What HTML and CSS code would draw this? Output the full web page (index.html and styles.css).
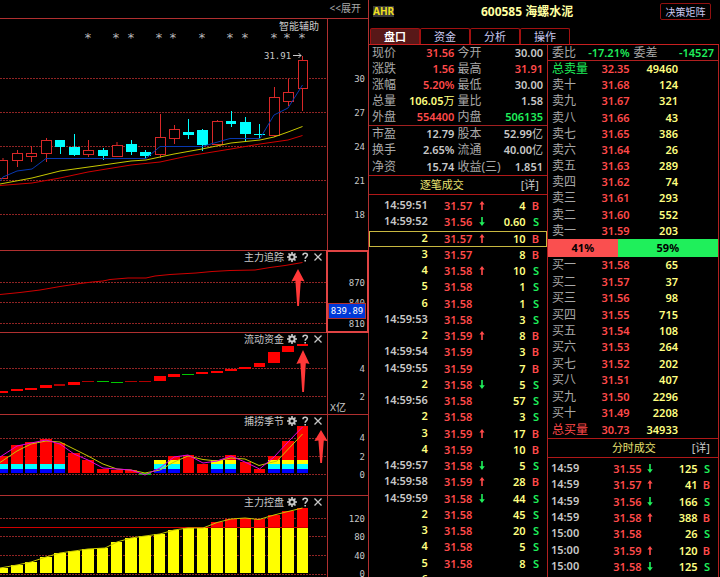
FILE: index.html
```html
<!DOCTYPE html>
<html lang="zh-CN">
<head>
    <meta charset="UTF-8">
    <meta name="viewport" content="width=device-width, initial-scale=1.0">
    <title>600585 海螺水泥</title>
    <link rel="stylesheet" href="styles.css">
</head>
<body>

    <!-- Shared icons -->
    <svg class="sprite" aria-hidden="true">
        <symbol id="gear" viewBox="0 0 10 10">
            <circle cx="5" cy="5" r="2.6" fill="none" stroke="currentColor" stroke-width="2"/>
            <path d="M5 0v2M5 8v2M0 5h2M8 5h2M1.5 1.5l1.4 1.4M7.1 7.1l1.4 1.4M8.5 1.5L7.1 2.9M2.9 7.1L1.5 8.5" stroke="currentColor" stroke-width="1.6"/>
        </symbol>
        <symbol id="help" viewBox="0 0 10 10">
            <path d="M3 3.2C3 .6 7.4.6 7.4 3.1 7.4 4.7 5.2 4.6 5.2 6.8M5.2 8v1.6" fill="none" stroke="currentColor" stroke-width="1.6"/>
        </symbol>
        <symbol id="close" viewBox="0 0 10 10">
            <path d="M1.5 1.5l7 7M8.5 1.5l-7 7" stroke="currentColor" stroke-width="1.3"/>
        </symbol>
        <symbol id="up" viewBox="0 0 6 9">
            <path d="M3 0L5.6 3.6H3.8V9H2.2V3.6H.4z" fill="#ff4a4a"/>
        </symbol>
        <symbol id="down" viewBox="0 0 6 9">
            <path d="M3 9L5.8 5.2H3.8V0H2.2V5.2H.2z" fill="#1fef5b"/>
        </symbol>
        <symbol id="pointer" viewBox="0 0 14 40" preserveAspectRatio="none">
            <path d="M7 0L13.6 13.4Q11.5 12.6 9.8 12.6L8 40H6.2L4.4 12.6Q2.4 12.6.4 13.4z" fill="#ff3838"/>
        </symbol>
    </svg>

    <div class="terminal">
        <main class="charts">
            <div class="charts-bar">
                <a href="#expand">&lt;&lt;展开</a>
            </div>

            <!-- Price -->
            <section class="panel panel-price">
                <div class="plot">
                    <svg viewBox="0 19 327 231" preserveAspectRatio="xMaxYMin meet">
                        <path class="grid" d="M0 78.5H327M0 112.5H327M0 146.5H327M0 180.5H327M0 214.5H327"/>
                        <g class="stars">
                            <text x="88" y="42">*</text>
                            <text x="116" y="42">*</text>
                            <text x="131" y="42">*</text>
                            <text x="159" y="42">*</text>
                            <text x="173" y="42">*</text>
                            <text x="202" y="42">*</text>
                            <text x="230" y="42">*</text>
                            <text x="245" y="42">*</text>
                            <text x="274" y="42">*</text>
                            <text x="287" y="42">*</text>
                            <text x="302" y="42">*</text>
                        </g>
                        <path class="wick-up" d="M3 158V160M17.5 150V153M17.5 161V167M31.5 146V153M31.5 157V162M46.5 138V140M46.5 154V162M88.5 140V150M88.5 155V157M117 142V145M160.5 114V137M160.5 155V158M174.5 125V129M174.5 139V144M217.5 120V121M274.5 87V97M274.5 136V137M288.5 79V92M288.5 102V106M302.5 56V60M302.5 89V111"/>
                        <g class="candle-up">
                            <rect x="-2.5" y="160.5" width="10" height="18"/>
                            <rect x="12.5" y="153.5" width="10" height="7"/>
                            <rect x="26.5" y="153.5" width="10" height="3"/>
                            <rect x="41.5" y="140.5" width="10" height="13"/>
                            <rect x="83.5" y="150.5" width="10" height="4"/>
                            <rect x="112.5" y="145.5" width="10" height="11"/>
                            <rect x="155.5" y="137.5" width="10" height="17"/>
                            <rect x="169.5" y="129.5" width="10" height="9"/>
                            <rect x="212.5" y="121.5" width="10" height="23"/>
                            <rect x="269.5" y="97.5" width="10" height="38"/>
                            <rect x="283.5" y="92.5" width="10" height="9"/>
                            <rect x="298.5" y="60.5" width="9" height="28"/>
                        </g>
                        <path class="wick-down" d="M60.5 140V154M74.5 134V156M103.5 148V160M131.5 140V155M145.5 150V158M188.5 119V139M202.5 129V151M231.5 111V127M245.5 117V141M259.5 124V138"/>
                        <g class="candle-down">
                            <rect x="55" y="140" width="10" height="7"/>
                            <rect x="69" y="147" width="11" height="8"/>
                            <rect x="98" y="150" width="10" height="6"/>
                            <rect x="126" y="144" width="11" height="8"/>
                            <rect x="140" y="152" width="11" height="4"/>
                            <rect x="183" y="132" width="11" height="3"/>
                            <rect x="197" y="130" width="11" height="15"/>
                            <rect x="226" y="121" width="10" height="3"/>
                            <rect x="240" y="122" width="11" height="12"/>
                            <rect x="254" y="134" width="11" height="1"/>
                        </g>
                        <path class="line blue" d="M0 181L3 177L17 171L32 169L46 158.5H146L160 146.5H202L230 138.5H260L274 115L288 108L302.5 85"/>
                        <path class="line yellow" d="M0 184L32 178L60 171L103 165L131 161L146 160L174 154L202 149L231 143L260 140L274 137L288 132L302.5 126.5"/>
                        <path class="line red" d="M0 185.5L32 183L60 178L88 172L131 165L160 162L188 156L231 149L260 144L288 140L302.5 135.5"/>
                        <text class="mark" x="264" y="59">31.91</text>
                        <path class="mark-arrow" d="M293 55.5H301M298.5 53L301 55.5L298.5 58"/>
                    </svg>
                    <div class="panel-name">智能辅助</div>
                </div>
                <div class="axis">
                    <svg viewBox="328 19 40 231">
                        <text x="365" y="82">30</text>
                        <text x="365" y="116">27</text>
                        <text x="365" y="150">24</text>
                        <text x="365" y="184">21</text>
                        <text x="365" y="218">18</text>
                    </svg>
                </div>
            </section>

            <!-- Main force tracking -->
            <section class="panel">
                <div class="plot">
                    <svg viewBox="0 251 327 81" preserveAspectRatio="xMaxYMin meet">
                        <path class="grid" d="M0 282.5H327M0 302.5H327M0 323.5H327"/>
                        <path class="line red" d="M0 294.5L20 292.5L40 290L60 286.5L80 283.5L92 282L103 281L110 279.5L128 278H146L155 276L170 274.5L196 273L212 271.5L230 270.5L255 270L270 267.5L285 265.5L302.5 262.5"/>
                        <use href="#pointer" x="291" y="269" width="14" height="37"/>
                    </svg>
                    <div class="panel-tools">
                        <span>主力追踪</span>
                        <button type="button" aria-label="设置"><svg><use href="#gear"/></svg></button>
                        <button type="button" aria-label="帮助"><svg><use href="#help"/></svg></button>
                        <button type="button" aria-label="关闭"><svg><use href="#close"/></svg></button>
                    </div>
                </div>
                <div class="axis axis-selected">
                    <svg viewBox="328 251 40 81">
                        <text x="365" y="286">870</text>
                        <text x="365" y="306">840</text>
                        <text x="365" y="327">810</text>
                    </svg>
                    <output class="axis-value">839.89</output>
                </div>
            </section>

            <!-- Capital flow -->
            <section class="panel">
                <div class="plot">
                    <svg viewBox="0 333 327 81" preserveAspectRatio="xMaxYMin meet">
                        <path class="grid" d="M0 368.5H327M0 396.5H327"/>
                        <g class="bar-red">
                            <rect x="-4" y="391" width="12" height="2"/>
                            <rect x="11" y="389" width="12" height="2"/>
                            <rect x="25" y="388" width="12" height="2"/>
                            <rect x="40" y="385" width="12" height="3"/>
                            <rect x="68" y="382" width="12" height="3"/>
                            <rect x="154" y="376" width="12" height="5"/>
                            <rect x="168" y="374" width="12" height="3"/>
                            <rect x="196" y="372" width="12" height="2"/>
                            <rect x="211" y="371" width="12" height="2"/>
                            <rect x="225" y="369" width="12" height="2"/>
                            <rect x="239" y="367" width="12" height="2"/>
                            <rect x="254" y="363" width="11" height="4"/>
                            <rect x="268" y="352" width="12" height="11"/>
                            <rect x="282" y="346" width="12" height="6"/>
                            <rect x="297" y="344" width="11" height="2"/>
                        </g>
                        <g class="bar-dark">
                            <rect x="54" y="384" width="11" height="2"/>
                            <rect x="82" y="381" width="12" height="1"/>
                            <rect x="125" y="381" width="12" height="1"/>
                            <rect x="139" y="381" width="12" height="1"/>
                        </g>
                        <g class="bar-green">
                            <rect x="97" y="381" width="12" height="1"/>
                            <rect x="111" y="382" width="12" height="1"/>
                            <rect x="182" y="374" width="12" height="1"/>
                        </g>
                        <use href="#pointer" x="296" y="350" width="14" height="42"/>
                    </svg>
                    <div class="panel-tools">
                        <span>流动资金</span>
                        <button type="button" aria-label="设置"><svg><use href="#gear"/></svg></button>
                        <button type="button" aria-label="帮助"><svg><use href="#help"/></svg></button>
                        <button type="button" aria-label="关闭"><svg><use href="#close"/></svg></button>
                    </div>
                </div>
                <div class="axis">
                    <svg viewBox="328 333 40 81">
                        <text x="365" y="372">4</text>
                        <text x="365" y="400">2</text>
                        <text class="unit" x="330" y="411">X亿</text>
                    </svg>
                </div>
            </section>

            <!-- Season -->
            <section class="panel panel-season">
                <div class="plot">
                    <svg viewBox="0 415 327 80" preserveAspectRatio="xMaxYMin meet">
                        <path class="grid" d="M0 438.5H327M0 456.5H327M0 474.5H327"/>
                        <g class="bar-red">
                            <rect x="-4" y="456" width="12" height="17"/>
                            <rect x="11" y="445" width="12" height="28"/>
                            <rect x="25" y="442" width="12" height="31"/>
                            <rect x="40" y="439" width="12" height="34"/>
                            <rect x="54" y="443" width="11" height="30"/>
                            <rect x="68" y="453" width="12" height="20"/>
                            <rect x="82" y="460" width="12" height="13"/>
                            <rect x="97" y="469" width="12" height="4"/>
                            <rect x="111" y="470" width="12" height="3"/>
                            <rect x="125" y="470" width="12" height="3"/>
                            <rect x="168" y="456" width="12" height="17"/>
                            <rect x="183" y="455" width="11" height="18"/>
                            <rect x="197" y="464" width="11" height="9"/>
                            <rect x="225" y="455" width="11" height="18"/>
                            <rect x="240" y="462" width="11" height="11"/>
                            <rect x="254" y="469" width="11" height="4"/>
                            <rect x="268" y="456" width="12" height="17"/>
                            <rect x="282" y="441" width="12" height="32"/>
                            <rect x="297" y="426" width="11" height="47"/>
                        </g>
                        <path class="bar-green" d="M139 473h12v2h-12z"/>
                        <path class="bar-yellow" d="M154 460h12v4h-12zM168 460h12v4h-12zM211 460h12v4h-12zM225 460h11v4h-11zM268 460h12v4h-12zM282 460h12v4h-12zM297 460h11v4h-11z"/>
                        <path class="bar-cyan" d="M-4 464h12v5h-12zM11 464h12v5h-12zM25 464h12v5h-12zM40 464h12v5h-12zM54 464h11v5h-11zM154 464h12v5h-12zM168 464h12v5h-12zM211 464h12v5h-12zM225 464h11v5h-11zM268 464h12v5h-12zM282 464h12v5h-12zM297 464h11v5h-11z"/>
                        <path class="bar-blue" d="M-4 469h12v4h-12zM11 469h12v4h-12zM25 469h12v4h-12zM40 469h12v4h-12zM54 469h11v4h-11zM154 469h12v4h-12zM168 469h12v4h-12zM211 469h12v4h-12zM225 469h11v4h-11zM268 469h12v4h-12zM282 469h12v4h-12zM297 469h11v4h-11z"/>
                        <path class="line yellow" d="M0 462.5L17 451L31 444L46 441L60 442L74 449L88 456L103 464L117 469L131 470L145 473L160 470L174 462L188 456L203 459.5L217 461L231 458L245 459L259 465.5L277 461L302.5 434"/>
                        <path class="line magenta" d="M0 457L17 446L31 443L46 440L60 444L74 454L88 460L103 468L131 470L145 475L160 468L174 457L188 455L203 463L217 461L231 456L245 462L259.5 469L274 457L288 442L302.5 427"/>
                        <use href="#pointer" x="314" y="430" width="14" height="33"/>
                    </svg>
                    <div class="panel-tools">
                        <span>捕捞季节</span>
                        <button type="button" aria-label="设置"><svg><use href="#gear"/></svg></button>
                        <button type="button" aria-label="帮助"><svg><use href="#help"/></svg></button>
                        <button type="button" aria-label="关闭"><svg><use href="#close"/></svg></button>
                    </div>
                </div>
                <div class="axis">
                    <svg viewBox="328 415 40 80">
                        <text x="365" y="441">4</text>
                        <text x="365" y="460">2</text>
                        <text x="365" y="478">0</text>
                    </svg>
                </div>
            </section>

            <!-- Main force control -->
            <section class="panel">
                <div class="plot">
                    <svg viewBox="0 496 327 81" preserveAspectRatio="xMaxYMin meet">
                        <path class="grid" d="M0 518.5H327M0 536.5H327M0 555.5H327M0 574.5H327"/>
                        <g class="bar-yellow">
                            <rect x="-4" y="568" width="12" height="5"/>
                            <rect x="11" y="565" width="12" height="8"/>
                            <rect x="25" y="562" width="12" height="11"/>
                            <rect x="40" y="557" width="12" height="16"/>
                            <rect x="54" y="553" width="12" height="20"/>
                            <rect x="68" y="551" width="12" height="22"/>
                            <rect x="82" y="549" width="12" height="24"/>
                            <rect x="97" y="548" width="11" height="25"/>
                            <rect x="111" y="542" width="11" height="31"/>
                            <rect x="125" y="538" width="12" height="35"/>
                            <rect x="139" y="536" width="12" height="37"/>
                            <rect x="154" y="534" width="11" height="39"/>
                            <rect x="168" y="530" width="11" height="43"/>
                            <rect x="183" y="528" width="11" height="45"/>
                            <rect x="197" y="528" width="11" height="45"/>
                            <rect x="211" y="528" width="12" height="45"/>
                            <rect x="225" y="528" width="12" height="45"/>
                            <rect x="240" y="528" width="11" height="45"/>
                            <rect x="254" y="528" width="11" height="45"/>
                            <rect x="268" y="528" width="12" height="45"/>
                            <rect x="282" y="528" width="12" height="45"/>
                            <rect x="297" y="528" width="11" height="45"/>
                        </g>
                        <g class="bar-red">
                            <rect x="211" y="522" width="12" height="5"/>
                            <rect x="225" y="519" width="12" height="8"/>
                            <rect x="240" y="518" width="11" height="9"/>
                            <rect x="254" y="519" width="11" height="8"/>
                            <rect x="268" y="515" width="12" height="12"/>
                            <rect x="282" y="511" width="12" height="16"/>
                            <rect x="297" y="508" width="11" height="19"/>
                        </g>
                        <path class="level" d="M0 527.5H308"/>
                        <path class="line yellow" d="M0 568L17 565L31 562L46 557L60 553L74 551L88 549L105 548L117 542L131 538L145 536L160 534L174 530L188 528H203L217 522.5L231 519L245 518L259 519.5L274 515L288 511.5L302.5 508"/>
                    </svg>
                    <div class="panel-tools">
                        <span>主力控盘</span>
                        <button type="button" aria-label="设置"><svg><use href="#gear"/></svg></button>
                        <button type="button" aria-label="帮助"><svg><use href="#help"/></svg></button>
                        <button type="button" aria-label="关闭"><svg><use href="#close"/></svg></button>
                    </div>
                </div>
                <div class="axis">
                    <svg viewBox="328 496 40 81">
                        <text x="365" y="522">120</text>
                        <text x="365" y="540">80</text>
                        <text x="365" y="559">40</text>
                        <text x="365" y="577">0</text>
                    </svg>
                </div>
            </section>
        </main>

        <aside class="side">
            <header class="stock">
                <span class="badge">AHR</span>
                <h1>600585 海螺水泥</h1>
                <button type="button" class="matrix">决策矩阵</button>
            </header>
            <nav class="tabs">
                <button type="button" class="active">盘口</button>
                <button type="button">资金</button>
                <button type="button">分析</button>
                <button type="button">操作</button>
            </nav>

            <div class="columns">
                <div class="col">
                    <table class="quote quote-main">
                        <tr><th>现价</th><td class="up">31.56</td><th>今开</th><td>30.00</td></tr>
                        <tr><th>涨跌</th><td class="up">1.56</td><th>最高</th><td class="up">31.91</td></tr>
                        <tr><th>涨幅</th><td class="up">5.20%</td><th>最低</th><td>30.00</td></tr>
                        <tr><th>总量</th><td class="vol">106.05<span>万</span></td><th>量比</th><td>1.58</td></tr>
                        <tr><th>外盘</th><td class="up">554400</td><th>内盘</th><td class="down">506135</td></tr>
                    </table>
                    <table class="quote quote-more">
                        <tr><th>市盈</th><td>12.79</td><th>股本</th><td>52.99<span>亿</span></td></tr>
                        <tr><th>换手</th><td>2.65%</td><th>流通</th><td>40.00<span>亿</span></td></tr>
                        <tr><th>净资</th><td>15.74</td><th>收益(三)</th><td>1.851</td></tr>
                    </table>
                    <div class="section-title">
                        <h2>逐笔成交</h2>
                        <a href="#ticks">[详]</a>
                    </div>
                    <div class="tick-list">
                        <table class="ticks">
                            <tr><td class="time">14:59:51</td><td class="up">31.57</td><td class="dir"><svg><use href="#up"/></svg></td><td class="vol">4</td><td class="side-b">B</td></tr>
                            <tr><td class="time">14:59:52</td><td class="up">31.56</td><td class="dir"><svg><use href="#down"/></svg></td><td class="vol">0.60</td><td class="side-s">S</td></tr>
                            <tr class="selected"><td class="seq">2</td><td class="up">31.57</td><td class="dir"><svg><use href="#up"/></svg></td><td class="vol">10</td><td class="side-b">B</td></tr>
                            <tr><td class="seq">3</td><td class="up">31.57</td><td class="dir"></td><td class="vol">8</td><td class="side-b">B</td></tr>
                            <tr><td class="seq">4</td><td class="up">31.58</td><td class="dir"><svg><use href="#up"/></svg></td><td class="vol">10</td><td class="side-s">S</td></tr>
                            <tr><td class="seq">5</td><td class="up">31.58</td><td class="dir"></td><td class="vol">1</td><td class="side-s">S</td></tr>
                            <tr><td class="seq">6</td><td class="up">31.58</td><td class="dir"></td><td class="vol">1</td><td class="side-s">S</td></tr>
                            <tr><td class="time">14:59:53</td><td class="up">31.58</td><td class="dir"></td><td class="vol">3</td><td class="side-s">S</td></tr>
                            <tr><td class="seq">2</td><td class="up">31.59</td><td class="dir"><svg><use href="#up"/></svg></td><td class="vol">8</td><td class="side-b">B</td></tr>
                            <tr><td class="time">14:59:54</td><td class="up">31.59</td><td class="dir"></td><td class="vol">3</td><td class="side-b">B</td></tr>
                            <tr><td class="time">14:59:55</td><td class="up">31.59</td><td class="dir"></td><td class="vol">7</td><td class="side-b">B</td></tr>
                            <tr><td class="seq">2</td><td class="up">31.58</td><td class="dir"><svg><use href="#down"/></svg></td><td class="vol">5</td><td class="side-s">S</td></tr>
                            <tr><td class="time">14:59:56</td><td class="up">31.58</td><td class="dir"></td><td class="vol">57</td><td class="side-s">S</td></tr>
                            <tr><td class="seq">2</td><td class="up">31.58</td><td class="dir"></td><td class="vol">3</td><td class="side-s">S</td></tr>
                            <tr><td class="seq">3</td><td class="up">31.59</td><td class="dir"><svg><use href="#up"/></svg></td><td class="vol">17</td><td class="side-b">B</td></tr>
                            <tr><td class="seq">4</td><td class="up">31.59</td><td class="dir"></td><td class="vol">10</td><td class="side-b">B</td></tr>
                            <tr><td class="time">14:59:57</td><td class="up">31.58</td><td class="dir"><svg><use href="#down"/></svg></td><td class="vol">5</td><td class="side-s">S</td></tr>
                            <tr><td class="time">14:59:58</td><td class="up">31.59</td><td class="dir"><svg><use href="#up"/></svg></td><td class="vol">28</td><td class="side-b">B</td></tr>
                            <tr><td class="time">14:59:59</td><td class="up">31.58</td><td class="dir"><svg><use href="#down"/></svg></td><td class="vol">44</td><td class="side-s">S</td></tr>
                            <tr><td class="seq">2</td><td class="up">31.58</td><td class="dir"></td><td class="vol">45</td><td class="side-s">S</td></tr>
                            <tr><td class="seq">3</td><td class="up">31.58</td><td class="dir"></td><td class="vol">20</td><td class="side-s">S</td></tr>
                            <tr><td class="seq">4</td><td class="up">31.58</td><td class="dir"></td><td class="vol">5</td><td class="side-s">S</td></tr>
                            <tr><td class="seq">5</td><td class="up">31.58</td><td class="dir"></td><td class="vol">8</td><td class="side-s">S</td></tr>
                            <tr><td class="seq">6</td><td class="up"></td><td class="dir"></td><td class="vol"></td><td></td></tr>
                        </table>
                    </div>
                </div>

                <div class="col">
                    <table class="quote quote-ratio">
                        <tr><th>委比</th><td class="down">-17.21%</td><th>委差</th><td class="down">-14527</td></tr>
                    </table>
                    <table class="book book-sell">
                        <tr><th class="down">总卖量</th><td class="up">32.35</td><td class="vol">49460</td></tr>
                        <tr><th>卖十</th><td class="up">31.68</td><td class="vol">124</td></tr>
                        <tr><th>卖九</th><td class="up">31.67</td><td class="vol">321</td></tr>
                        <tr><th>卖八</th><td class="up">31.66</td><td class="vol">43</td></tr>
                        <tr><th>卖七</th><td class="up">31.65</td><td class="vol">386</td></tr>
                        <tr><th>卖六</th><td class="up">31.64</td><td class="vol">26</td></tr>
                        <tr><th>卖五</th><td class="up">31.63</td><td class="vol">289</td></tr>
                        <tr><th>卖四</th><td class="up">31.62</td><td class="vol">74</td></tr>
                        <tr><th>卖三</th><td class="up">31.61</td><td class="vol">293</td></tr>
                        <tr><th>卖二</th><td class="up">31.60</td><td class="vol">552</td></tr>
                        <tr><th>卖一</th><td class="up">31.59</td><td class="vol">203</td></tr>
                    </table>
                    <div class="ratio">
                        <div class="ratio-sell" style="width: 41%">41%</div>
                        <div class="ratio-buy">59%</div>
                    </div>
                    <table class="book book-buy">
                        <tr><th>买一</th><td class="up">31.58</td><td class="vol">65</td></tr>
                        <tr><th>买二</th><td class="up">31.57</td><td class="vol">37</td></tr>
                        <tr><th>买三</th><td class="up">31.56</td><td class="vol">98</td></tr>
                        <tr><th>买四</th><td class="up">31.55</td><td class="vol">715</td></tr>
                        <tr><th>买五</th><td class="up">31.54</td><td class="vol">108</td></tr>
                        <tr><th>买六</th><td class="up">31.53</td><td class="vol">264</td></tr>
                        <tr><th>买七</th><td class="up">31.52</td><td class="vol">202</td></tr>
                        <tr><th>买八</th><td class="up">31.51</td><td class="vol">407</td></tr>
                        <tr><th>买九</th><td class="up">31.50</td><td class="vol">2296</td></tr>
                        <tr><th>买十</th><td class="up">31.49</td><td class="vol">2208</td></tr>
                        <tr><th class="up">总买量</th><td class="up">30.73</td><td class="vol">34933</td></tr>
                    </table>
                    <div class="section-title section-minute">
                        <h2>分时成交</h2>
                        <a href="#minutes">[详]</a>
                    </div>
                    <div class="tick-list">
                        <table class="ticks minutes">
                            <tr><td class="time">14:59</td><td class="up">31.55</td><td class="dir"><svg><use href="#down"/></svg></td><td class="vol">125</td><td class="side-s">S</td></tr>
                            <tr><td class="time">14:59</td><td class="up">31.57</td><td class="dir"><svg><use href="#up"/></svg></td><td class="vol">41</td><td class="side-b">B</td></tr>
                            <tr><td class="time">14:59</td><td class="up">31.56</td><td class="dir"><svg><use href="#down"/></svg></td><td class="vol">166</td><td class="side-s">S</td></tr>
                            <tr><td class="time">14:59</td><td class="up">31.58</td><td class="dir"><svg><use href="#up"/></svg></td><td class="vol">388</td><td class="side-b">B</td></tr>
                            <tr><td class="time">15:00</td><td class="up">31.58</td><td class="dir"></td><td class="vol">26</td><td class="side-s">S</td></tr>
                            <tr><td class="time">15:00</td><td class="up">31.59</td><td class="dir"><svg><use href="#up"/></svg></td><td class="vol">120</td><td class="side-b">B</td></tr>
                            <tr><td class="time">15:00</td><td class="up">31.58</td><td class="dir"><svg><use href="#down"/></svg></td><td class="vol">125</td><td class="side-s">S</td></tr>
                        </table>
                    </div>
                </div>
            </div>
        </aside>
    </div>

</body>
</html>
```
FILE: styles.css
```css
* {
    box-sizing: border-box;
}

body {
    margin: 0;
    background-color: #000;
    color: #c8c8c8;
    font-family: "Noto Sans", "Noto Sans CJK SC", sans-serif;
    font-size: 11px;
    line-height: 14px;
}

a {
    color: inherit;
    text-decoration: none;
}

button {
    margin: 0;
    padding: 0;
    border: none;
    background: none;
    color: inherit;
    font: inherit;
    cursor: pointer;
}

h1, h2 {
    margin: 0;
}

.sprite {
    display: none;
}

.terminal {
    display: grid;
    grid-template-columns: 46fr 44fr;
    height: 100vh;
    overflow: hidden;
}

/* Charts */
.charts {
    min-width: 0;
}

.charts-bar {
    height: 18px;
    padding: 1px 7px 0;
    text-align: right;
    font-size: 10px;
    color: #a8a8a8;
}

.panel {
    display: grid;
    grid-template-columns: 1fr 41px;
    height: 82px;
    border-top: 1px solid #b03030;
}

.panel-price {
    height: 232px;
}

.panel-season {
    height: 81px;
}

.plot {
    position: relative;
    min-width: 0;
}

.plot > svg,
.axis > svg {
    display: block;
    width: 100%;
    height: 100%;
}

.axis {
    position: relative;
    border-left: 1px solid #b03030;
}

.axis text,
.mark {
    font-family: "DejaVu Sans Mono", monospace;
    font-size: 9px;
    fill: #c8c8c8;
}

.axis text {
    text-anchor: end;
}

.axis .unit {
    font-family: "Liberation Mono", "Noto Sans CJK SC", monospace;
    font-size: 10px;
    text-anchor: start;
}

.axis-selected {
    outline: 2px solid #e04444;
    outline-offset: -1px;
}

.axis-value {
    position: absolute;
    top: 52px;
    left: 0;
    right: 2px;
    height: 16px;
    border: 1px solid #b03030;
    background-color: #0038d8;
    color: #fff;
    font-family: "DejaVu Sans Mono", monospace;
    font-size: 9px;
    text-align: center;
}

.panel-name {
    position: absolute;
    top: 2px;
    right: 8px;
    font-size: 10px;
    line-height: 11px;
}

.panel-tools {
    position: absolute;
    top: 0;
    right: 4px;
    display: flex;
    align-items: center;
    gap: 3px;
    height: 11px;
    font-size: 10px;
}

.panel-tools button,
.panel-tools svg {
    display: block;
    width: 10px;
    height: 10px;
}

.grid {
    stroke: #902424;
    stroke-dasharray: 2 1;
}

.stars text {
    font-family: "DejaVu Sans Mono", monospace;
    font-size: 13px;
    text-anchor: middle;
    fill: #b8b8b8;
}

.mark-arrow {
    fill: none;
    stroke: #c8c8c8;
}

.wick-up,
.candle-up {
    fill: #000;
    stroke: #d82828;
}

.wick-down {
    stroke: #00ffff;
}

.candle-down,
.bar-cyan {
    fill: #00ffff;
}

.bar-red {
    fill: #ff0000;
}

.bar-dark {
    fill: #b00000;
}

.bar-green {
    fill: #00c800;
}

.bar-yellow {
    fill: #ffff00;
}

.bar-blue {
    fill: #0000ff;
}

.line {
    fill: none;
}

.blue {
    stroke: #0838b0;
}

.yellow {
    stroke: #c8c800;
}

.red,
.level {
    stroke: #d00000;
}

.magenta {
    stroke: #e000e0;
}

/* Side */
.side {
    display: flex;
    flex-direction: column;
    min-width: 0;
    min-height: 0;
    margin-right: 1px;
    border-left: 1px solid #b03030;
}

.stock {
    display: flex;
    align-items: center;
    justify-content: space-between;
    height: 28px;
    padding: 0 8px 5px 4px;
}

.badge {
    background-color: #383838;
    color: #f0e020;
    font-size: 10px;
    font-weight: bold;
    line-height: 11px;
}

.stock h1 {
    color: #ffffa0;
    font-size: 12px;
    line-height: 16px;
}

.matrix {
    width: 51px;
    height: 17px;
    border: 1px solid #901010;
    border-radius: 2px;
    color: #c8c8f0;
    font-size: 10px;
    line-height: 14px;
}

.tabs {
    display: flex;
    height: 17px;
    padding-left: 1px;
    border-bottom: 1px solid #c82020;
}

.tabs button {
    width: 50px;
    border: 1px solid #a01010;
    border-bottom: none;
    border-radius: 2px 2px 0 0;
    color: #c8c8f0;
    line-height: 14px;
}

.tabs .active {
    background-color: #581818;
    color: #fff;
    font-weight: bold;
}

.columns {
    display: grid;
    grid-template-columns: 179fr 171fr;
    flex: 1;
    min-height: 0;
}

.col {
    display: flex;
    flex-direction: column;
    min-width: 0;
    min-height: 0;
    border-right: 1px solid #b02020;
}

table {
    width: 100%;
    border-collapse: collapse;
    table-layout: fixed;
    line-height: 16px;
}

th, td {
    padding: 0;
    text-align: right;
    font-weight: 600;
    white-space: nowrap;
}

th {
    text-align: left;
    color: #a8a8a8;
    font-size: 12px;
    font-weight: normal;
}

td span {
    font-weight: normal;
}

.up {
    color: #ff4a4a;
}

.down {
    color: #1fef5b;
}

.vol {
    color: #ffff80;
}

.quote th {
    width: 15%;
    padding-left: 3px;
}

.quote td:nth-child(2) {
    width: 33%;
}

.quote td:last-child {
    padding-right: 4px;
}

.quote-main {
    height: 80px;
}

.quote-more {
    height: 50px;
    border-top: 1px solid #a02020;
}

.quote-ratio th {
    padding-left: 4px;
}

.quote-ratio {
    height: 15px;
    line-height: 15px;
}

.section-title {
    display: flex;
    align-items: center;
    height: 20px;
    padding-right: 8px;
    border-top: 1px solid #b01818;
    border-bottom: 1px solid #b01818;
}

.section-title h2 {
    flex: 1;
    padding-right: 6px;
    color: #e8e070;
    font-size: 11px;
    font-weight: normal;
    text-align: center;
}

.section-minute h2 {
    padding: 0 0 0 28px;
}

.tick-list {
    flex: 1;
    min-height: 0;
    padding-top: 3px;
    overflow: hidden;
}

.ticks {
    height: 390px;
}

.ticks td:nth-child(1) {
    width: 33%;
    padding-bottom: 2px;
    line-height: 14px;
}

.ticks td:nth-child(2) {
    width: 25%;
}

.ticks .dir {
    width: 7%;
}

.dir svg {
    display: inline-block;
    width: 6px;
    height: 9px;
    vertical-align: baseline;
}

.ticks td:nth-child(5) {
    padding-right: 8px;
    width: 12%;
}

.seq {
    color: #ffff80;
}

.side-b {
    color: #ff4a4a;
}

.side-s {
    color: #1fef5b;
}

.selected {
    outline: 1px solid #c8b840;
    outline-offset: -1px;
}

.book {
    height: 179px;
}

.book-sell {
    border-top: 1px solid #b02020;
}

.book-buy {
    height: 181px;
}

.book th {
    width: 30%;
    padding-left: 4px;
}

.book td:nth-child(2) {
    width: 18%;
}

.book .vol {
    padding-right: 40px;
}

.ratio {
    display: flex;
    height: 18px;
    color: #000;
    font-weight: bold;
    line-height: 18px;
    text-align: center;
}

.ratio-sell {
    background-color: #fa4f4f;
}

.ratio-buy {
    flex: 1;
    background-color: #1fef5b;
}

.minutes {
    height: 114px;
}

.minutes td:nth-child(1) {
    width: 30%;
    padding-left: 3px;
    text-align: left;
}
```
